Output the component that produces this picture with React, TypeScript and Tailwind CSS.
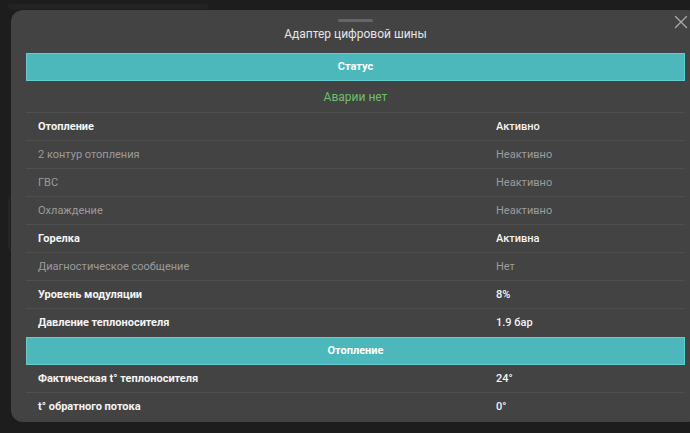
import { X } from "lucide-react";

type Row = { label: string; value: string; active: boolean };

const statusRows: Row[] = [
  { label: "Отопление", value: "Активно", active: true },
  { label: "2 контур отопления", value: "Неактивно", active: false },
  { label: "ГВС", value: "Неактивно", active: false },
  { label: "Охлаждение", value: "Неактивно", active: false },
  { label: "Горелка", value: "Активна", active: true },
  { label: "Диагностическое сообщение", value: "Нет", active: false },
  { label: "Уровень модуляции", value: "8%", active: true },
  { label: "Давление теплоносителя", value: "1.9 бар", active: true },
];

const heatingRows: Row[] = [
  { label: "Фактическая t° теплоносителя", value: "24°", active: true },
  { label: "t° обратного потока", value: "0°", active: true },
];

function SectionBar({ title }: { title: string }) {
  return (
    <div className="mx-[15px] h-[28px] flex items-center justify-center bg-[#4db8bc] border border-[#64cdd0] text-[11px] font-bold text-white">
      {title}
    </div>
  );
}

function DataRow({ row, last }: { row: Row; last?: boolean }) {
  return (
    <div
      className={
        "mx-[15px] h-[28px] grid grid-cols-[458px_1fr] items-center px-[12px] pt-[1px] text-[11px] " +
        (last ? "" : "border-b border-[#4f4f4f]") +
        (row.active ? " text-[#f4f4f4]" : " text-[#9b9b9b]")
      }
    >
      <span className={row.active ? "font-bold" : ""}>{row.label}</span>
      <span className={row.active ? "font-medium" : ""}>{row.value}</span>
    </div>
  );
}

export default function App() {
  return (
    <div
      className="relative w-[690px] h-[433px] overflow-hidden bg-[#1d1d1d]"
      style={{ fontFamily: "Roboto, 'Noto Sans', sans-serif" }}
    >
      {/* dimmed page behind */}
      <div className="flex flex-col gap-6 pl-2 pt-1 opacity-40">
        <div className="h-[5px] w-[200px] rounded bg-[#2c2c2c]" />
        <div className="h-[60px] w-[20px] mt-[160px] rounded-[8px] border-2 border-[#333]" />
      </div>

      {/* modal */}
      <div className="absolute left-[11px] top-[10px] w-[689px] h-[412px] rounded-[12px] bg-[#434343] flex flex-col">
        <button className="absolute left-[659px] top-[1px] text-[#a8a8a8]">
          <X size={22} strokeWidth={1.5} />
        </button>
        <div className="mt-[9px] mx-auto h-[3px] w-[35px] rounded-full bg-[#666]" />
        <div className="mt-[4px] mb-[11px] h-[16px] flex items-center justify-center text-[12px] text-[#e6e6e6]">
          Адаптер цифровой шины
        </div>

        <SectionBar title="Статус" />
        <div className="mx-[15px] h-[32px] flex items-center justify-center border-b border-[#4f4f4f] text-[12px] text-[#6cc06a]">
          Аварии нет
        </div>
        {statusRows.map((r, i) => (
          <DataRow key={r.label} row={r} last={i === statusRows.length - 1} />
        ))}

        <SectionBar title="Отопление" />
        {heatingRows.map((r, i) => (
          <DataRow key={r.label} row={r} last={i === heatingRows.length - 1} />
        ))}
      </div>
    </div>
  );
}
